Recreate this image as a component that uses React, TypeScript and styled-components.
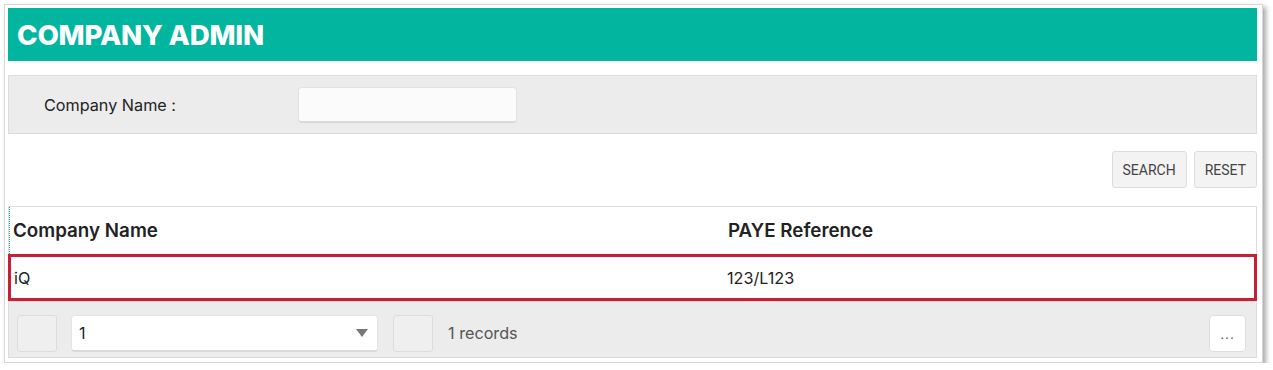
import React from "react";
import styled, { createGlobalStyle } from "styled-components";

const Global = createGlobalStyle`
  html, body { margin: 0; padding: 0; background: #ffffff; }
  body { font-family: Inter, "Liberation Sans", Arial, sans-serif; color: #333; }
  * { box-sizing: border-box; }
`;

const Card = styled.div`
  margin: 4px 0 0 4px;
  width: 1259px;
  border: 1px solid #d6d6d6;
  background: #fff;
  padding: 3px 5px 4px 3px;
  box-shadow: 3px 3px 5px rgba(0, 0, 0, 0.35);
`;

const Header = styled.div`
  height: 53px;
  background: #01b59e;
  display: flex;
  align-items: center;
  padding-left: 9px;
`;

const Title = styled.h1`
  margin: 0;
  color: #fff;
  font-family: Inter, "Liberation Sans", sans-serif;
  font-weight: 800;
  font-size: 27.7px;
  letter-spacing: -0.2px;
`;

const FilterPanel = styled.div`
  margin-top: 14px;
  height: 59px;
  background: #ececec;
  border: 1px solid #dcdcdc;
  display: flex;
  align-items: center;
  padding-left: 35px;
`;

const Label = styled.label`
  width: 254px;
  font-size: 16.2px;
  color: #222;
`;

const TextInput = styled.input`
  width: 219px;
  height: 36px;
  border: 1px solid #e2e2e2;
  border-bottom: 2px solid #dadada;
  border-radius: 4px;
  background: #fbfbfb;
  outline: none;
`;

const ButtonRow = styled.div`
  margin-top: 17px;
  display: flex;
  justify-content: flex-end;
  gap: 7px;
`;

const Button = styled.button`
  height: 37px;
  padding: 0 10px;
  background: #f3f3f3;
  border: 1px solid #dcdcdc;
  border-radius: 3px;
  font-family: Roboto, "Liberation Sans", sans-serif;
  font-size: 14px;
  color: #444;
`;

const Table = styled.div`
  margin-top: 18px;
  border: 1px solid #dcdcdc;
`;

const Row = styled.div<{ $selected?: boolean; $head?: boolean }>`
  display: grid;
  grid-template-columns: 714px 1fr;
  height: 47px;
  align-items: center;
  margin: ${(p) => (p.$selected ? "0 -1px" : "0")};
  border: ${(p) => (p.$selected ? "3px solid #c81f36" : "none")};
  font-size: ${(p) => (p.$head ? "18.8px" : "16.2px")};
  font-weight: ${(p) => (p.$head ? 600 : 400)};
  color: #222;
  ${(p) => (p.$head ? "border-left: 1px dotted #1aa89a;" : "")}
`;

const Cell = styled.div<{ $inset?: number }>`
  padding-left: ${(p) => p.$inset ?? 4}px;
`;

const Footer = styled.div`
  height: 56px;
  background: #ececec;
  border-top: 1px solid #dcdcdc;
  display: flex;
  align-items: flex-start;
  padding: 13px 10px 0 8px;
`;

const Square = styled.div`
  width: 40px;
  height: 37px;
  background: #efefef;
  border: 1px solid #dcdcdc;
  border-radius: 3px;
`;

const Select = styled.div`
  margin: 0 15px 0 14px;
  width: 307px;
  height: 37px;
  background: #fff;
  border: 1px solid #e4e4e4;
  border-bottom: 2px solid #dadada;
  border-radius: 4px;
  display: flex;
  align-items: center;
  justify-content: space-between;
  padding: 0 9px 0 7px;
  font-size: 16px;
  color: #222;
`;

const Caret = styled.span`
  width: 0;
  height: 0;
  border-left: 6px solid transparent;
  border-right: 6px solid transparent;
  border-top: 8px solid #777;
`;

const Records = styled.span`
  margin-left: 15px;
  line-height: 37px;
  font-size: 16.2px;
  color: #555;
  flex: 1;
`;

const MoreButton = styled.button`
  width: 37px;
  height: 37px;
  background: #fff;
  border: 1px solid #dedede;
  border-radius: 4px;
  font-size: 14px;
  color: #555;
  padding: 0;
  letter-spacing: 1px;
`;

export default function App() {
  return (
    <>
      <Global />
      <Card>
        <Header>
          <Title>COMPANY ADMIN</Title>
        </Header>
        <FilterPanel>
          <Label>Company Name :</Label>
          <TextInput />
        </FilterPanel>
        <ButtonRow>
          <Button>SEARCH</Button>
          <Button>RESET</Button>
        </ButtonRow>
        <Table>
          <Row $head>
            <Cell $inset={3}>Company Name</Cell>
            <Cell>PAYE Reference</Cell>
          </Row>
          <Row $selected>
            <Cell $inset={3}>iQ</Cell>
            <Cell $inset={2}>123/L123</Cell>
          </Row>
          <Footer>
            <Square />
            <Select>
              <span>1</span>
              <Caret />
            </Select>
            <Square />
            <Records>1 records</Records>
            <MoreButton>...</MoreButton>
          </Footer>
        </Table>
      </Card>
    </>
  );
}
